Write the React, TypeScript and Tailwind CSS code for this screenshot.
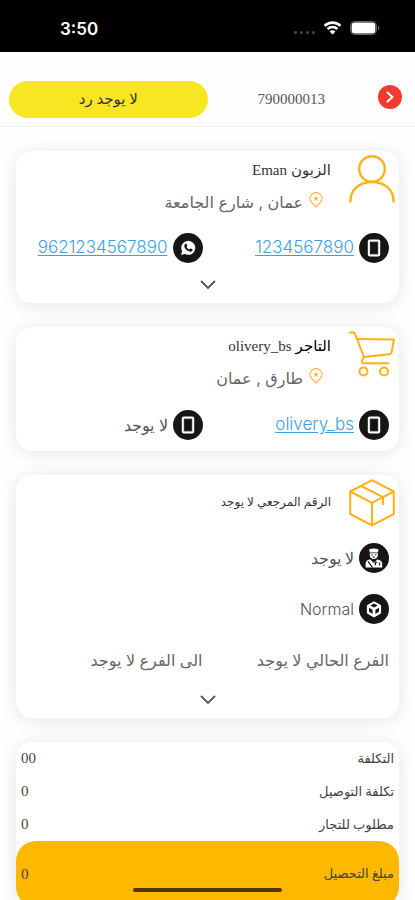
import type { ReactNode } from 'react';

const SERIF = "font-['Liberation_Serif','DejaVu_Sans',serif]";
const SANS = "font-['Inter','DejaVu_Sans',sans-serif]";

function StatusBar() {
  return (
    <div dir="ltr" className="flex h-[52px] items-center justify-between bg-black pt-2 pr-[34px] pl-[60px] text-white">
      <span className="font-['Inter',sans-serif] text-[17px] font-semibold">3:50</span>
      <div className="flex items-center gap-2 pb-1">
        <div className="flex gap-[3px] pt-2">
          {[0, 1, 2, 3].map((i) => (
            <span key={i} className="size-[3px] rounded-full bg-[#4a4a4a]" />
          ))}
        </div>
        <svg width="19" height="14" viewBox="0 0 19 15" fill="none" stroke="#fff" strokeWidth="2.8">
          <path d="M1 5.2C5.8 .6 13.2 .6 18 5.2" />
          <path d="M4.2 8.6C7.2 5.8 11.8 5.8 14.8 8.6" />
          <path d="M9.5 14.5L6.4 11.2C8.2 9.6 10.8 9.6 12.6 11.2Z" fill="#fff" stroke="none" />
        </svg>
        <svg width="31" height="14" viewBox="0 0 31 14">
          <rect x=".5" y=".5" width="26" height="13" rx="4" fill="none" stroke="#666" />
          <rect x="1.6" y="1.6" width="23.8" height="10.8" rx="3" fill="#fff" />
          <path d="M28 4.6Q31 7 28 9.4Z" fill="#666" />
        </svg>
      </div>
    </div>
  );
}

function UserIcon() {
  return (
    <svg width="46" height="48" viewBox="0 0 46 48" fill="none" stroke="#ffb01a" strokeWidth="2.4" strokeLinecap="round">
      <circle cx="23" cy="14" r="12.8" />
      <path d="M1.4 46.4C1.4 35 10 27 23 27S44.6 35 44.6 46.4" />
    </svg>
  );
}

function CartIcon() {
  return (
    <svg width="46" height="48" viewBox="0 0 46 48" fill="none" stroke="#ffb01a" strokeWidth="2" strokeLinecap="round" strokeLinejoin="round">
      <path d="M1 1.5H4.4Q5.6 1.5 6 2.8L15 26L13.2 29Q12 32.3 15.2 32.3H39.5" />
      <path d="M9.5 8L45 8.5L42.6 21Q42.2 23 40.4 23.2L15 26" />
      <circle cx="14.5" cy="40.5" r="4" />
      <circle cx="35" cy="40.5" r="4" />
    </svg>
  );
}

function BoxIcon() {
  return (
    <svg width="46" height="48" viewBox="0 0 46 48" fill="none" stroke="#ffb01a" strokeWidth="2" strokeLinejoin="round">
      <path d="M23 1.2L44.8 12.5V35L23 46.3L1.2 35V12.5Z" />
      <path d="M1.2 12.5L23 23.8L44.8 12.5M23 23.8V46" />
      <path d="M12 7L34 18.2V26" />
    </svg>
  );
}

function PinIcon() {
  return (
    <svg width="14" height="16" viewBox="0 0 14 16" fill="none" stroke="#ffb050" strokeWidth="1.1" className="mb-1">
      <path d="M7 15C5.6 12.6 .9 10.2 .9 6.4A6.1 5.8 0 0 1 13.1 6.4C13.1 10.2 8.4 12.6 7 15Z" />
      <path d="M7 3.6L7.9 5.5L10 5.7L8.4 7.1L8.9 9.2L7 8.1L5.1 9.2L5.6 7.1L4 5.7L6.1 5.5Z" fill="#ffb868" stroke="none" />
    </svg>
  );
}

function PhoneGlyph() {
  return (
    <svg width="14" height="18" viewBox="0 0 14 18">
      <rect x=".8" y=".4" width="12.4" height="17.2" rx="2" fill="#fff" />
      <rect x="2.8" y="2.6" width="8.4" height="12.8" fill="#333" />
      <rect x="3.8" y="3.6" width="6.4" height="10.8" fill="#111" />
    </svg>
  );
}

function WhatsappGlyph() {
  return (
    <svg width="16" height="16" viewBox="0 0 16 16">
      <path d="M1 15L2.1 11.2A7 7 0 1 1 4.9 14Z" fill="#fff" />
      <path
        d="M5.3 3.8Q6 3.2 6.6 3.9L7.2 5.6Q7.3 6.2 6.6 6.9Q7.5 8.6 9.3 9.4L10.2 8.6Q10.6 8.4 11 8.6L12.4 9.4Q12.8 10 12.2 10.9Q11.2 12 9.5 11.6Q5.6 10.4 4.3 6.8Q4 5 5.3 3.8Z"
        fill="#161616"
      />
    </svg>
  );
}

function CourierGlyph() {
  return (
    <svg width="20" height="22" viewBox="0 0 20 22" fill="#fff">
      <path d="M5 2.6Q9.8 .2 14.6 2.6L13.8 5.4H5.8Z" />
      <path d="M5.8 6.2H13.8V8.2Q13.4 12 9.8 12T5.8 8.2Z" />
      <path d="M1.6 20.5V16Q2.2 12.8 6.4 12.4L9.8 16L13.2 12.4Q17.6 13 18.2 16V20.5Z" />
      <path d="M7.2 8H8.8M10.8 8H12.4M8.6 10.2H11" stroke="#161616" strokeWidth=".9" />
      <path d="M4 14.4L8.4 20.4M11.4 18.2V15.4H13.2M15.6 15.4V18.2" stroke="#161616" strokeWidth="1.2" fill="none" />
    </svg>
  );
}

function CubeGlyph() {
  return (
    <svg width="16" height="17" viewBox="0 0 16 17">
      <path d="M8 .8L14.6 4.4V12.2L8 16L1.4 12.2V4.4Z" fill="#fff" stroke="#fff" strokeLinejoin="round" />
      <path d="M8 2.6L11.6 4.6L8 6.6L4.4 4.6ZM3 6.8L6.6 8.8V12.8L3 10.8ZM13 6.8L9.4 8.8V12.8L13 10.8Z" fill="#161616" />
    </svg>
  );
}

function Badge({ children }: { children: ReactNode }) {
  return (
    <span className="flex size-[30px] shrink-0 items-center justify-center rounded-full bg-[#161616] text-white">
      {children}
    </span>
  );
}

function Contact({ icon, label, href }: { icon: ReactNode; label: string; href?: string }) {
  return (
    <div className={`flex h-[30px] items-center gap-[5px] ${SANS}`}>
      <Badge>{icon}</Badge>
      {href ? (
        <a href={href} className="text-[17px] font-light text-[#3ba0e2] underline underline-offset-2">
          {label}
        </a>
      ) : (
        <span className="text-base font-light text-[#555]">{label}</span>
      )}
    </div>
  );
}

function Card({ children }: { children: ReactNode }) {
  return <section className="rounded-2xl bg-white shadow-[0_2px_18px_rgba(0,0,0,0.1)]">{children}</section>;
}

function CardHead({ icon, title, address }: { icon: ReactNode; title: ReactNode; address?: string }) {
  return (
    <div className="flex items-start gap-[18px] ps-1 pt-1">
      {icon}
      {address ? (
        <div>
          <h2 className={`flex h-[30px] items-center gap-1 text-[15px] text-[#333] ${SERIF}`}>{title}</h2>
          <p className={`flex h-[34px] items-center gap-[6px] ps-2 text-base text-[#666] ${SANS}`}>
            <PinIcon />
            {address}
          </p>
        </div>
      ) : (
        <h2 className={`flex h-[46px] items-center text-[12px] text-[#333] ${SERIF}`}>{title}</h2>
      )}
    </div>
  );
}

function ExpandButton({ label }: { label: string }) {
  return (
    <button type="button" aria-label={label} className="flex h-9 w-full items-center justify-center">
      <svg width="16" height="10" viewBox="0 0 16 10" fill="none" stroke="#555" strokeWidth="1.8">
        <path d="M1 1L8 8L15 1" />
      </svg>
    </button>
  );
}

const costs = [
  { label: 'التكلفة', value: '00' },
  { label: 'تكلفة التوصيل', value: '0' },
  { label: 'مطلوب للتجار', value: '0' },
];

export default function App() {
  return (
    <div dir="rtl" lang="ar" className="h-screen overflow-hidden bg-[#fefefe]">
      <StatusBar />

      <header className="grid grid-cols-2 items-center border-b border-[#eee] pt-[29px] pb-2">
        <div className={`flex items-center ps-[13px] ${SERIF}`}>
          <button type="button" aria-label="رجوع" className="mb-[5px] flex size-6 items-center justify-center rounded-full bg-[#f03c30]">
            <svg width="8" height="12" viewBox="0 0 8 12" fill="none" stroke="#fff" strokeWidth="2" strokeLinecap="round">
              <path d="M1.5 1.5L6.5 6L1.5 10.5" />
            </svg>
          </button>
          <span className="ps-[53px] text-[15px] text-[#555]">790000013</span>
        </div>
        <button type="button" className={`me-[9px] h-[37px] rounded-full bg-[#f9e622] text-[15px] text-[#333] ${SERIF}`}>
          لا يوجد رد
        </button>
      </header>

      <main className="flex flex-col gap-6 px-4 pt-6">
        <Card>
          <CardHead
            icon={<UserIcon />}
            title={
              <>
                <span>الزبون</span>
                <span>Eman</span>
              </>
            }
            address="عمان , شارع الجامعة"
          />
          <div className="grid grid-cols-2 ps-[10px] pt-[14px] pb-1">
            <Contact icon={<PhoneGlyph />} label="1234567890" href="tel:1234567890" />
            <Contact icon={<WhatsappGlyph />} label="9621234567890" href="https://wa.me/9621234567890" />
          </div>
          <ExpandButton label="المزيد عن الزبون" />
        </Card>

        <Card>
          <CardHead
            icon={<CartIcon />}
            title={
              <>
                <span className="text-black">التاجر</span>
                <span>olivery_bs</span>
              </>
            }
            address="طارق , عمان"
          />
          <div className="grid grid-cols-2 ps-[10px] pt-[15px] pb-[11px]">
            <Contact icon={<PhoneGlyph />} label="olivery_bs" href="#olivery_bs" />
            <Contact icon={<PhoneGlyph />} label="لا يوجد" />
          </div>
        </Card>

        <Card>
          <CardHead icon={<BoxIcon />} title="الرقم المرجعي لا يوجد" />
          <div className="flex flex-col gap-[21px] ps-[10px] pt-4">
            <Contact icon={<CourierGlyph />} label="لا يوجد" />
            <Contact icon={<CubeGlyph />} label="Normal" />
            <div className={`grid h-[30px] grid-cols-2 items-center text-base text-[#666] ${SANS}`}>
              <span>الفرع الحالي لا يوجد</span>
              <span>الى الفرع لا يوجد</span>
            </div>
          </div>
          <div className="pt-[7px]">
            <ExpandButton label="المزيد عن الطلب" />
          </div>
        </Card>

        <Card>
          <dl className={`text-[13px] text-[#444] ${SERIF}`}>
            {costs.map((c) => (
              <div key={c.label} className="flex h-[33px] items-center justify-between px-[5px]">
                <dt>{c.label}</dt>
                <dd className="text-[15px]">{c.value}</dd>
              </div>
            ))}
            <div className="flex h-[66px] items-center justify-between rounded-[20px] bg-[#ffb800] px-[5px]">
              <dt>مبلغ التحصيل</dt>
              <dd className="text-[15px]">0</dd>
            </div>
          </dl>
        </Card>
      </main>

      <div className="fixed inset-x-0 bottom-2 mx-auto h-1 w-[36%] rounded-full bg-[#4a3805]" />
    </div>
  );
}
